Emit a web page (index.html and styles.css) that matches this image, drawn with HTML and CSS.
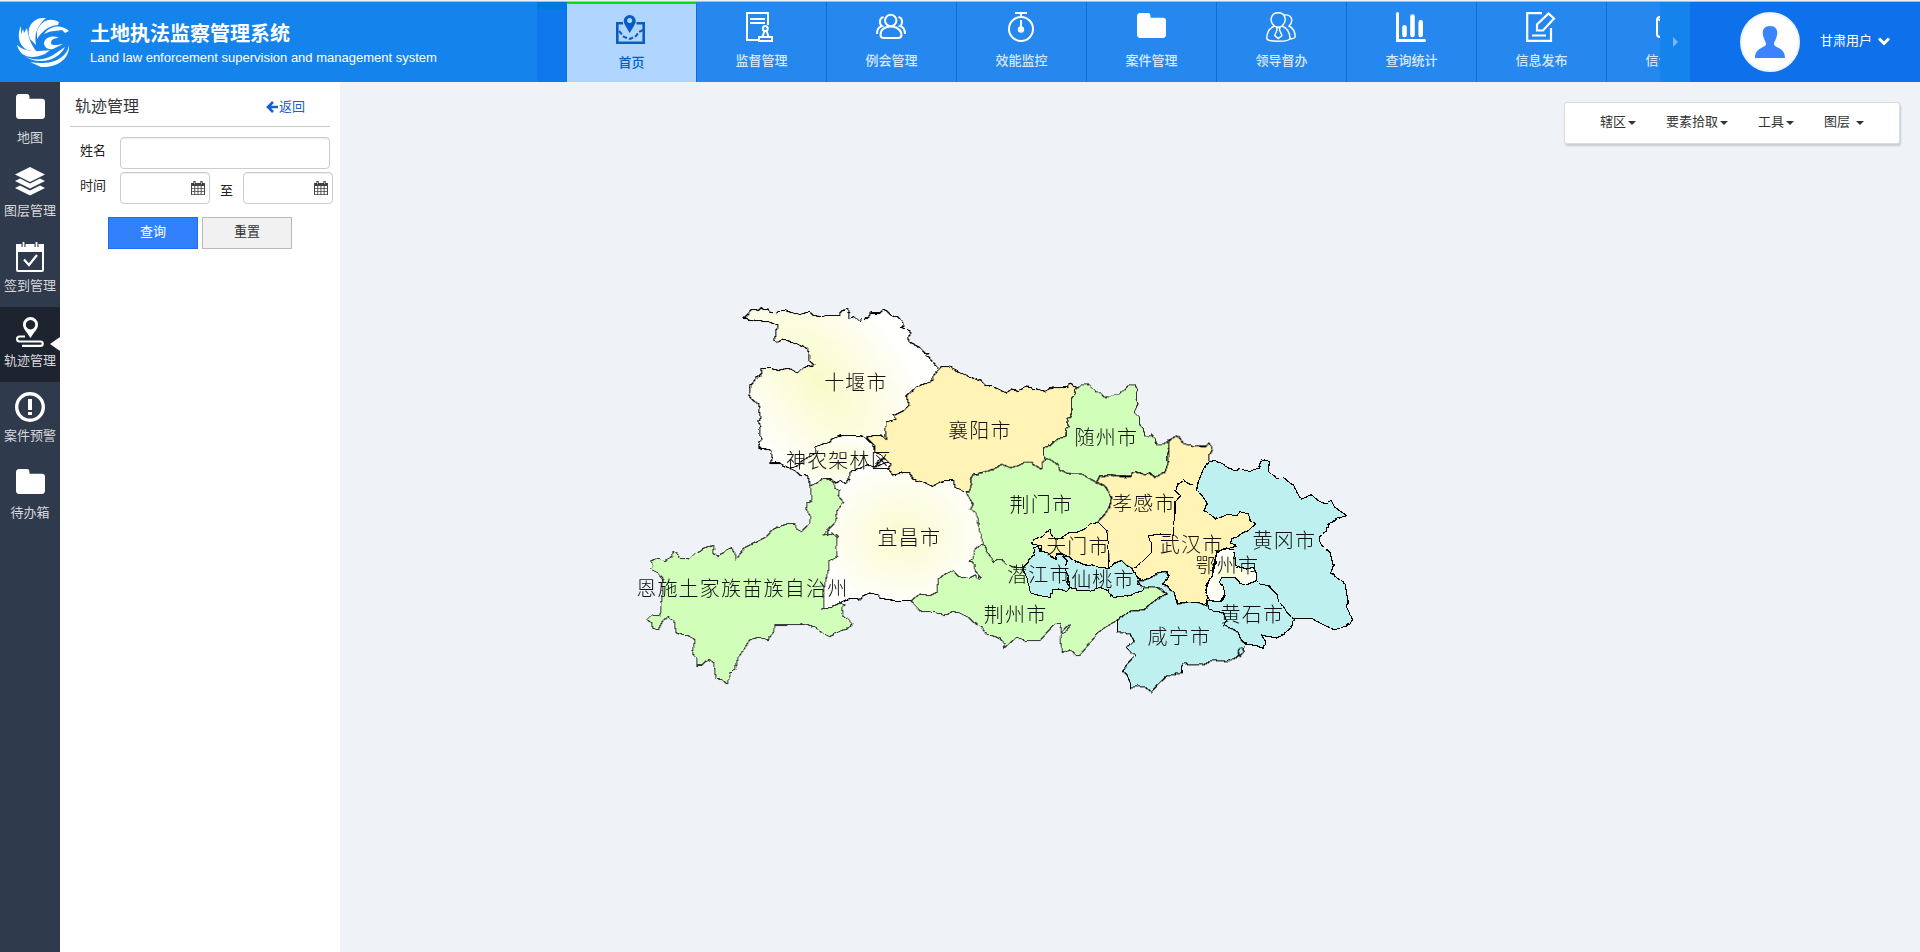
FILE: index.html
```html
<!DOCTYPE html>
<html lang="zh-CN">
<head>
<meta charset="utf-8">
<title>土地执法监察管理系统</title>
<link rel="stylesheet" href="styles.css">
</head>
<body>
<svg class="defs" width="0" height="0">
  <defs>
    <symbol id="folder" viewBox="0 0 28 24"><path d="M0 3.500Q0 0 3 0H10.500Q13 0 13 3V4.500H25Q28 4.500 28 7.500V21Q28 24 25 24H3Q0 24 0 21Z" fill="#fff"/></symbol>
    <symbol id="cal" viewBox="0 0 14 14"><path d="M0 2H14V14H0Z" fill="#444"/><path d="M1 5h2.300v2.200H1zM4.200 5h2.300v2.200H4.200zM7.400 5h2.300v2.200H7.400zM10.600 5H13v2.200h-2.400zM1 8h2.300v2.200H1zM4.200 8h2.300v2.200H4.200zM7.400 8h2.300v2.200H7.400zM10.600 8H13v2.200h-2.400zM1 11h2.300v2.200H1zM4.200 11h2.300v2.200H4.200zM7.400 11h2.300v2.200H7.400zM10.600 11H13v2.200h-2.400z" fill="#fff"/><path d="M3.500 0v3.500M10.500 0v3.500" stroke="#333" stroke-width="2.200"/><path d="M3.500 .8v2.400M10.500 .8v2.400" stroke="#ccc" stroke-width=".8"/></symbol>
  </defs>
</svg>

<header class="header">
  <div class="brand">
    <svg class="logo" width="53" height="50" viewBox="0 0 53 50" fill="#fff">
      <path d="M4 9C0 17 1 28 10 33L20 35C13 27 11 18 10 11L7 16L6 12L4 17Z"/>
      <path d="M24 1C14 3 9 12 13 22L19 28C17 17 20 9 29 1Z"/>
      <path d="M42 5C32 0 24 4 20 14L20 22C26 13 32 9 41 8Z"/>
      <path d="M52 14C45 7 33 8 27 17C35 13 41 14 45 13L48 16Z"/>
      <path d="M42 21C36 18 28 20 27 26C27 31 33 34 38 31L46 27C40 28 34 29 34 26C34 22 38 21 42 21Z"/>
      <path d="M0 28C3 40 14 43 28 37L33 33C19 35 8 35 0 28Z"/>
      <path d="M3 36C13 45 29 44 39 36L48 30C42 43 21 51 3 36Z"/>
      <path d="M52 28C50 42 33 49 13 45L24 50C40 51 53 42 52 28Z"/>
    </svg>
    <div class="brand-text">
      <h1>土地执法监察管理系统</h1>
      <p>Land law enforcement supervision and management system</p>
    </div>
  </div>
  <div class="nav-prev"></div>
  <nav class="nav">
    <a class="nav-item active">
      <svg width="30" height="32" viewBox="0 0 30 32" fill="none" stroke="#0a5cc0" stroke-width="2.600"><path d="M7 9.300H1.300V28.700H27.700V9.300H20.500"/><path d="M3 17l5 6 6 2 6-3 3-4 4-2" stroke-width="2" stroke-dasharray="4.500 2"/><path d="M13.700 19C11 14 7.700 10 7.700 7a6 6 0 0 1 12 0c0 3-3 7-6 12Z" fill="#0a5cc0" stroke="none"/><circle cx="13.700" cy="6.500" r="2.500" fill="#b0d5fe" stroke="none"/></svg>
      <span>首页</span></a>
    <a class="nav-item">
      <svg width="30" height="32" viewBox="0 0 30 32" fill="none" stroke="#fff" stroke-width="2"><path d="M12 28H1V1H22V13M4 7H19M4 11H19"/><circle cx="19.300" cy="16.500" r="2.500"/><path d="M18.500 19l-2 5.500M20.500 19l2 5.500M13 25H26V29H13Z"/></svg>
      <span>监督管理</span></a>
    <a class="nav-item">
      <svg width="30" height="32" viewBox="0 0 30 32" fill="none" stroke="#fff" stroke-width="2"><circle cx="14.700" cy="8.500" r="5.700"/><path d="M9.500 15.500C6 17 4.500 20 4.500 23Q4.500 26 8 26H22Q25.500 26 25.500 23C25.500 20 23 17 20 15.500Q14.700 13.500 9.500 15.500ZM7.500 5C3 6 3 12 6 14C2.500 15 1 18 1 22M22.500 5C27 6 27 12 24 14C27.500 15 29 18 29 22"/></svg>
      <span>例会管理</span></a>
    <a class="nav-item">
      <svg width="30" height="32" viewBox="0 0 30 32" fill="none" stroke="#fff" stroke-width="2"><circle cx="15" cy="17" r="12"/><path d="M9 1H21M15 1V5M15 8V16"/><circle cx="15" cy="17.500" r="2.200" fill="#fff"/></svg>
      <span>效能监控</span></a>
    <a class="nav-item"><svg class="nav-folder" width="29" height="25"><use href="#folder"/></svg><span>案件管理</span></a>
    <a class="nav-item">
      <svg width="30" height="32" viewBox="0 0 30 32" fill="none" stroke="#fff" stroke-width="1.400"><path d="M8.500 14C2.500 9 5 .7 12.300 .7S21.500 9 16 14Q23.500 17 24 26Q24 29.300 12.300 29.300T.7 26Q1 17 8.500 14Q12 16.500 16 14M18 3C26 2 28 9 23 14C27 16 29 20 29.200 24.500Q29 26.500 24 27"/><path d="M10.500 15.500H14L13.500 18L16 23.500L12.300 26.500L8.700 23.500L11 18Z"/></svg>
      <span>领导督办</span></a>
    <a class="nav-item">
      <svg width="30" height="32" viewBox="0 0 30 32" fill="none" stroke="#fff" stroke-linecap="round"><path d="M1.500 1.500V28.500H28.500" stroke-width="3"/><path d="M8.500 23V15.200M16.500 23V4.500M24.700 23V10.300" stroke-width="4.600"/></svg>
      <span>查询统计</span></a>
    <a class="nav-item">
      <svg width="30" height="32" viewBox="0 0 30 32" fill="none" stroke="#fff" stroke-width="2.200"><path d="M16 1.200H1.200V28.800H25V16M6 23.500H20"/><path d="M11 18.500V12.500L22.500 1.500L28 6.500L17 18.500Z"/></svg>
      <span>信息发布</span></a>
    <a class="nav-item">
      <svg width="30" height="32" viewBox="0 0 30 32" fill="none" stroke="#fff" stroke-width="2"><rect x="1" y="5" width="27" height="20" rx="3"/><path d="M2 7L15 16L27 7"/></svg>
      <span>信访管理</span></a>
  </nav>
  <div class="nav-next"><i></i></div>
  <div class="user">
    <div class="avatar"><svg width="32" height="34" viewBox="0 0 32 34" fill="#3c84ff"><path d="M16 1C8 1 8 8 9.500 12C10.500 16 12 17 12 19C12 23 1 22 1 33H31C31 22 20 23 20 19C20 17 21.500 16 22.500 12C24 8 24 1 16 1Z"/></svg></div>
    <span>甘肃用户</span>
    <svg width="12" height="9" viewBox="0 0 12 9" fill="none" stroke="#fff" stroke-width="3"><path d="M1 1.500L6 6.500L11 1.500"/></svg>
  </div>
</header>

<div class="body">
  <aside class="side">
    <a class="side-item"><svg class="folder" width="29" height="25"><use href="#folder"/></svg><span>地图</span></a>
    <a class="side-item layers"><svg width="30" height="29" viewBox="0 0 30 29" fill="#fff"><path d="M15 0L30 7.500L15 15L0 7.500Z"/><path d="M0 14L5 11.500L15 16.500L25 11.500L30 14L15 21.500Z"/><path d="M0 21L5 18.500L15 23.500L25 18.500L30 21L15 28.500Z"/></svg><span>图层管理</span></a>
    <a class="side-item"><svg width="28" height="30" viewBox="0 0 28 30"><rect x="1" y="3" width="26" height="26" rx="1" fill="none" stroke="#fff" stroke-width="2"/><path d="M0 2H28V10H0Z" fill="#fff"/><path d="M7.500 0V5M20.500 0V5" stroke="#2f3a4c" stroke-width="4"/><path d="M7.500 0V5M20.500 0V5" stroke="#fff" stroke-width="1.800"/><path d="M8 17.500L13 23L21 13" fill="none" stroke="#fff" stroke-width="2.200"/></svg><span>签到管理</span></a>
    <a class="side-item active"><svg width="28" height="30" viewBox="0 0 28 30"><path fill-rule="evenodd" d="M14.500 21C11 15 7 12 7 7.500a7.500 7.500 0 0 1 15 0C22 12 18 15 14.500 21ZM14.500 3a4.700 4.700 0 1 0 .01 0Z" fill="#fff"/><path d="M9 19.500H3.500a2.500 2.500 0 0 0 0 5H24.500a2.200 2.200 0 0 1 0 4.400H6" fill="none" stroke="#fff" stroke-width="2.200"/></svg><span>轨迹管理</span></a>
    <a class="side-item"><svg width="30" height="30" viewBox="0 0 30 30"><circle cx="15" cy="15" r="13.300" fill="none" stroke="#fff" stroke-width="3.400"/><path d="M13 7H17V18H13ZM13 20H17V23H13Z" fill="#fff"/></svg><span>案件预警</span></a>
    <a class="side-item last"><svg class="folder" width="29" height="25"><use href="#folder"/></svg><span>待办箱</span></a>
  </aside>

  <section class="panel">
    <div class="panel-head"><h2>轨迹管理</h2>
      <a class="back"><svg width="12" height="12" viewBox="0 0 12 12" fill="none" stroke="#1560d4" stroke-width="2.600"><path d="M7 1L2 6L7 11M2 6H12"/></svg>返回</a></div>
    <div class="row"><label>姓名</label><div class="input"></div></div>
    <div class="row"><label>时间</label><div class="input date"><svg width="14" height="14"><use href="#cal"/></svg></div><span class="to">至</span><div class="input date"><svg width="14" height="14"><use href="#cal"/></svg></div></div>
    <div class="buttons"><button class="btn primary">查询</button><button class="btn">重置</button></div>
  </section>

  <main class="map">
    <div class="toolbar"><span>辖区<i></i></span><span>要素拾取<i></i></span><span>工具<i></i></span><span>图层 <i></i></span></div>
    <svg class="regions" width="740" height="410" viewBox="0 0 2220 1230">
      <defs>
        <radialGradient id="cream"><stop offset="0" stop-color="#fafbce"/><stop offset="1" stop-color="#fffffd"/></radialGradient>
        <radialGradient id="cream-nw" gradientUnits="userSpaceOnUse" cx="0" cy="0" r="1" gradientTransform="translate(570 275) rotate(52) scale(480 250)"><stop offset="0" stop-color="#fafbca"/><stop offset="1" stop-color="#fffffd"/></radialGradient>
        <filter id="coast" filterUnits="userSpaceOnUse" x="0" y="0" width="2220" height="1230" color-interpolation-filters="sRGB"><feTurbulence type="fractalNoise" baseFrequency=".04" numOctaves="1" seed="4"/><feDisplacementMap in="SourceGraphic" scale="10" xChannelSelector="R" yChannelSelector="G"/></filter>
      </defs>
      <g class="shapes" filter="url(#coast)">
        <polygon class="cream" points="600,560 655,568 662,545 690,542 712,528 735,534 770,520 900,540 1000,580 1060,720 1080,780 1035,890 930,920 840,935 790,934 750,928 745,918 720,912 700,920 690,935 680,928 655,930 630,940 605,955 580,960 560,900 600,700"/>
        <polygon class="cream-nw" points="341,88 352,77 362,63 375,62 385,64 394,55 400,62 415,60 420,70 438,72 445,64 465,65 490,72 510,76 525,72 540,70 550,80 575,82 600,79 628,79 632,68 648,60 656,72 658,88 672,83 688,99 696,88 715,86 722,72 750,72 760,60 770,66 785,80 800,84 815,96 820,108 810,116 825,118 838,122 842,134 834,146 836,158 850,166 870,176 885,192 895,194 890,200 900,206 912,222 922,240 1000,300 850,480 708,470 600,530 480,538 462,530 450,522 420,522 428,508 420,482 395,478 383,472 388,458 396,452 386,435 394,412 384,398 390,380 383,345 362,328 357,318 362,290 380,265 397,252 392,240 415,237 445,244 475,238 502,252 518,236 535,232 545,236 550,226 540,218 540,200 532,180 510,166 485,157 455,153 440,160 431,152 438,135 440,108 415,98 385,95"/>
        <polygon class="cream" points="480,538 500,532 520,515 545,500 558,490 556,475 575,466 600,460 605,450 630,441 660,440 700,441 712,452 728,466 735,488 750,492 762,508 745,520 735,534 712,528 690,542 662,545 655,568 648,584 632,574 618,582 600,568 580,570 562,586 542,592 532,562 510,558 495,545"/>
        <polygon class="sand" transform="translate(690 180)" points="245,52 255,52 270,55 290,68 310,75 330,82 350,94 362,92 375,108 395,112 415,120 437,132 455,120 475,124 500,114 530,120 555,127 570,118 600,115 622,116 630,104 640,112 655,116 646,122 650,134 635,148 636,180 632,205 622,208 630,232 617,238 615,262 590,272 570,290 552,296 550,320 558,330 545,362 530,352 515,340 495,340 480,348 450,356 425,346 400,362 370,370 340,375 332,390 335,408 328,428 310,428 285,415 280,395 245,396 218,412 190,400 158,390 148,370 125,372 98,378 88,362 92,345 75,330 65,318 45,310 45,290 20,265 40,260 65,258 80,270 75,240 78,218 98,214 108,210 100,200 130,185 148,170 138,140 165,118 180,108 210,100 235,62"/>
        <polygon class="green" transform="translate(690 180)" points="655,116 665,108 680,104 695,114 712,132 738,146 760,136 775,134 795,122 805,108 825,108 832,120 828,150 834,165 822,190 838,205 838,225 850,240 855,262 872,256 885,268 890,286 910,284 928,278 930,300 922,320 925,345 915,368 900,378 885,385 870,372 855,380 840,372 822,368 812,384 780,380 750,378 720,380 712,402 690,390 665,375 625,374 600,362 590,345 570,332 558,330 550,320 552,296 570,290 590,272 615,262 617,238 630,232 622,208 632,205 636,180 635,148 650,134 646,122"/>
        <polygon class="green" transform="translate(690 180)" points="338,378 370,370 400,362 425,346 450,356 480,348 495,340 515,340 530,352 545,362 548,340 558,330 570,332 590,345 600,362 625,374 665,375 690,390 712,402 735,412 752,430 756,450 745,485 712,522 680,580 560,640 520,680 450,680 400,650 385,612 370,585 358,545 355,510 345,490 332,480 340,465 330,450 318,430 328,428 335,408 332,390"/>
        <polygon class="green" transform="translate(0 540)" points="590,30 600,33 612,42 615,58 628,65 625,80 640,100 622,125 612,165 590,185 582,198 605,192 622,205 618,240 622,262 598,275 595,305 585,340 580,370 582,400 580,420 605,415 630,402 645,408 635,415 640,440 655,450 670,465 650,480 622,490 598,504 575,492 560,478 515,465 470,468 435,468 430,490 415,512 385,505 360,512 345,535 325,565 315,605 300,612 292,645 275,632 258,628 250,580 235,570 215,588 200,588 202,570 188,555 195,512 175,500 155,498 138,490 132,455 115,442 98,455 85,482 68,478 65,462 50,452 65,438 90,440 95,390 100,330 85,312 62,300 68,290 62,275 85,268 105,275 125,262 130,245 140,252 148,268 178,270 200,248 225,235 252,230 248,252 262,262 305,235 318,258 318,272 345,235 375,222 405,205 420,188 440,175 470,165 495,165 500,180 515,188 535,165 540,140 528,120 532,100 547,98 540,50 560,42 580,28"/>
        <polygon class="green" transform="translate(750 630)" points="90,305 105,295 120,285 150,290 170,280 175,240 195,225 220,215 235,232 265,238 285,228 298,242 302,236 285,215 280,190 267,186 278,180 288,150 305,136 315,140 322,158 340,188 350,180 365,182 380,198 400,204 430,205 500,250 700,250 825,262 840,272 858,285 825,305 790,332 745,338 720,358 660,395 600,468 585,470 580,458 565,452 548,460 540,425 545,405 560,398 570,378 560,382 545,400 540,375 530,372 505,395 480,425 440,425 410,415 380,440 368,450 375,432 360,420 345,412 320,408 305,385 280,370 265,355 235,340 215,338 200,348 150,338 125,338"/>
        <polygon class="sand" transform="translate(1350 390)" points="268,65 288,50 300,58 312,75 360,82 378,82 390,72 396,88 386,108 388,128 400,180 350,250 300,400 180,460 155,448 140,440 125,425 110,430 88,450 80,340 52,310 75,285 90,260 95,235 75,200 50,190 60,170 90,168 120,172 150,172 160,158 180,162 195,168 208,162 225,175 240,165 255,160 265,130 268,100 265,90"/>
        <polygon class="sand" transform="translate(750 630)" points="655,70 680,95 685,130 688,208 660,205 620,198 590,188 565,172 548,165 530,165 525,182 505,160 480,158 482,140 455,135 465,122 490,105 510,93 520,112 530,125 550,112 565,102 590,100 610,92 635,75"/>
        <polygon class="blue" transform="translate(750 630)" points="465,145 475,142 480,158 505,160 525,182 530,165 548,165 562,185 555,205 565,235 560,250 570,265 560,278 540,270 515,272 510,295 480,290 450,282 448,260 432,225 430,205 445,190 460,165"/>
        <polygon class="blue" transform="translate(750 630)" points="548,172 565,172 590,188 620,198 660,205 690,208 705,190 725,185 740,200 755,208 768,222 780,245 772,255 790,262 785,275 750,290 700,295 685,275 660,265 630,275 595,275 570,265 565,235 555,205 562,185"/>
        <polygon class="blue" transform="translate(1350 390)" points="172,485 188,485 205,478 240,458 265,458 262,475 248,498 262,502 285,530 292,555 325,548 350,548 380,560 400,570 430,582 438,600 432,620 455,628 475,640 480,655 495,675 490,690 470,715 440,728 400,722 370,738 325,738 315,730 305,742 305,762 260,772 235,795 215,818 195,805 170,800 152,808 150,790 140,765 128,758 138,740 165,708 150,700 138,685 162,665 150,645 112,638 112,605 145,578 190,572 225,545 258,525 245,510 225,502 188,508"/>
        <polygon class="blue" transform="translate(1350 390)" points="405,125 420,130 440,142 465,156 480,150 500,155 535,148 545,118 568,128 565,160 590,178 610,175 640,200 665,240 695,228 715,245 735,255 750,248 765,265 800,290 775,298 745,315 738,340 720,352 718,372 750,400 760,440 752,462 795,495 803,540 800,565 818,602 795,622 765,632 735,620 695,598 640,600 620,580 598,548 585,520 565,500 540,495 480,470 430,430 430,360 405,302 375,275 380,250 350,220 352,195 370,150 385,128"/>
        <polygon class="blue" transform="translate(1350 390)" points="420,475 440,470 465,475 500,497 530,485 540,495 565,500 585,520 598,548 620,580 640,600 635,625 610,645 590,657 545,648 555,665 550,688 530,680 500,675 480,655 475,640 455,628 432,620 438,600 430,582 385,570 385,545 420,548 435,530 430,508 418,490"/>
        <polygon class="blue" transform="translate(1350 390)" points="480,686 490,690 492,702 480,712 474,700"/>
        <polygon class="sand" transform="translate(1350 390)" points="310,185 325,192 352,198 350,215 365,228 380,250 375,275 395,290 405,302 430,292 450,285 470,290 480,278 505,285 510,302 528,315 515,325 505,335 490,340 470,355 455,358 455,372 468,382 440,390 410,400 400,440 398,460 380,500 385,530 380,560 350,548 325,548 292,555 285,530 262,500 248,498 265,470 262,457 235,460 205,478 188,485 172,478 160,448 185,430 215,400 215,375 208,350 240,345 280,348 280,320 285,285 285,250 302,230 285,215 295,195"/>
        <polygon class="cream" transform="translate(1350 390)" points="410,402 440,392 460,390 465,415 468,440 500,450 520,445 530,465 528,485 500,497 480,490 465,475 425,475 418,490 430,505 435,525 420,548 390,545 375,520 385,490 400,460 405,430"/>
      </g>
      <g class="labels">
        <text x="678" y="300">十堰市</text><text x="1050" y="444">襄阳市</text><text x="1429" y="466">随州市</text><text x="627" y="534">神农架林区</text><text x="1234" y="665">荆门市</text><text x="1542" y="664">孝感市</text><text x="838" y="765">宜昌市</text><text x="1344" y="792">天门市</text><text x="1685" y="787">武汉市</text><text x="1963" y="775">黄冈市</text><text x="1792" y="850">鄂州市</text><text x="1227" y="877">潜江市</text><text x="1419" y="890">仙桃市</text><text x="1157" y="997">荆州市</text><text x="1867" y="997">黄石市</text><text x="1648" y="1062">咸宁市</text><text x="337" y="919">恩施土家族苗族自治州</text>
      </g>
    </svg>
  </main>
</div>
</body>
</html>
```
FILE: styles.css
```css
* { box-sizing: border-box; }
body { margin: 0; height: 952px; overflow: hidden; display: flex; flex-direction: column; font: 13px/18px "Liberation Sans", "Noto Sans CJK SC", sans-serif; color: #333; }
.defs { position: absolute; }
h1, h2, p { margin: 0; }
svg { display: block; flex: none; }

.header { height: 82px; flex: none; display: flex; border-top: 1px solid #efefef; background: #1583ec; box-shadow: inset 0 1px #b8bcc0; }
.brand { width: 537px; flex: none; display: flex; padding: 16px 0 0 17px; gap: 20px; }
.brand-text { color: #fff; padding-top: 3px; white-space: nowrap; }
.brand-text h1 { font-size: 20px; line-height: 28px; font-weight: 700; }
.brand-text p { font-size: 13px; line-height: 18px; margin-top: 1px; }
.nav-prev { width: 30px; flex: none; margin-top: 1px; background: #1078ed; border-top: 8px solid #027adb; }
.nav { width: 1093px; flex: none; display: flex; overflow: hidden; margin-top: 1px; background: #2687ee; }
.nav-item { width: 130px; flex: none; display: flex; flex-direction: column; align-items: center; padding-top: 10px; border-right: 1px solid #0a6edb; color: #d8e7fb; font-weight: 500; }
.nav-item svg { margin-left: -1px; }
.nav-item span { margin-top: 8px; }
.nav-item .nav-folder { margin: 1px 0 6px -1px; }
.nav-item.active { background: #b0d5fe; border-top: 2px solid #00e015; color: #0a5cc0; }
.nav-next { width: 30px; flex: none; display: flex; align-items: center; justify-content: center; }
.nav-next i { border: 5px solid transparent; border-left-color: #7db5f5; border-right: 0; }
.user { flex: 1; margin-top: 1px; background: #0f70ec; color: #fff; display: flex; align-items: center; padding-left: 50px; }
.avatar { width: 60px; height: 60px; border-radius: 50%; background: #fff; border: 2px solid #eaf3ff; display: flex; align-items: center; justify-content: center; margin-right: 20px; }
.user > span { margin-bottom: 2px; }
.user > svg { margin: 0 0 2px 6px; }

.body { flex: 1; display: flex; min-height: 0; }
.side { width: 60px; flex: none; background: #2f3a4c; color: #d6d8dc; }
.side-item { height: 75px; display: flex; flex-direction: column; align-items: center; justify-content: space-between; padding: 10px 0 12px; white-space: nowrap; position: relative; }
.side-item .folder { margin-top: 2px; }
.side-item:first-child { padding-bottom: 10px; }
.side-item.active { background: #1d232f; }
.side-item.active::after { content: ""; position: absolute; right: 0; top: 30px; border: 7px solid transparent; border-right: 10px solid #fff; border-left: 0; }
.side-item.last { padding-bottom: 10px; }

.panel { width: 280px; flex: none; background: #fff; padding: 10px 0 0 10px; }
.panel-head { width: 260px; height: 35px; border-bottom: 1px solid #c6c6cc; display: flex; justify-content: space-between; padding: 4px 25px 0 5px; }
.panel-head h2 { font-size: 16px; line-height: 22px; font-weight: 400; }
.back { display: flex; align-items: center; gap: 1px; height: 21px; color: #1560d4; }
.row { display: flex; height: 35px; }
.panel-head + .row { margin-top: 10px; }
.row label { width: 40px; padding: 5px 0 0 0; margin-left: 10px; color: #222; }
.input { width: 210px; height: 32px; border: 1px solid #ccc; border-radius: 4px; background: #fff; box-shadow: inset 0 1px 1px rgba(0,0,0,.075); }
.date { width: 90px; display: flex; align-items: center; justify-content: flex-end; padding-right: 4px; }
.to { width: 33px; text-align: center; padding-top: 10px; color: #222; }
.buttons { display: flex; gap: 4px; margin: 10px 0 0 38px; }
.btn { width: 90px; height: 32px; border: 1px solid #bbb; background: #f1f1f1; color: #333; font: inherit; padding: 0 0 2px; }
.btn.primary { background: #3380ff; border-color: #1a6ff5; color: #fff; }

.map { flex: 1; background: #eff3f7; display: flex; flex-direction: column; }
.toolbar { width: 336px; height: 42px; flex: none; margin: 20px 20px 0 auto; border: 1px solid #dcdcdc; border-radius: 3px; background: #fff; box-shadow: 1px 2px 2px #c8ccd0; display: flex; align-items: center; padding: 0 0 2px 35px; gap: 30px; }
.toolbar span { display: flex; align-items: center; white-space: pre; }
.toolbar i { border: 4px solid transparent; border-top-color: #333; border-bottom: 0; margin: 2px 0 0 2px; }
.regions { margin: 145px 0 0 290px; }
.shapes polygon { stroke: #000; stroke-width: 3.300; shape-rendering: crispEdges; }
.cream { fill: url(#cream); }
.cream-nw { fill: url(#cream-nw); }
.shapes .sand { fill: #fff3b5; }
.shapes .green { fill: #d1ffba; stroke: #333; }
.shapes .blue { fill: #bef0ef; }
.labels { font: 300 60px "Noto Sans CJK SC", sans-serif; letter-spacing: 3.700px; text-anchor: middle; fill: #111; transform: translateY(3px); }
```
